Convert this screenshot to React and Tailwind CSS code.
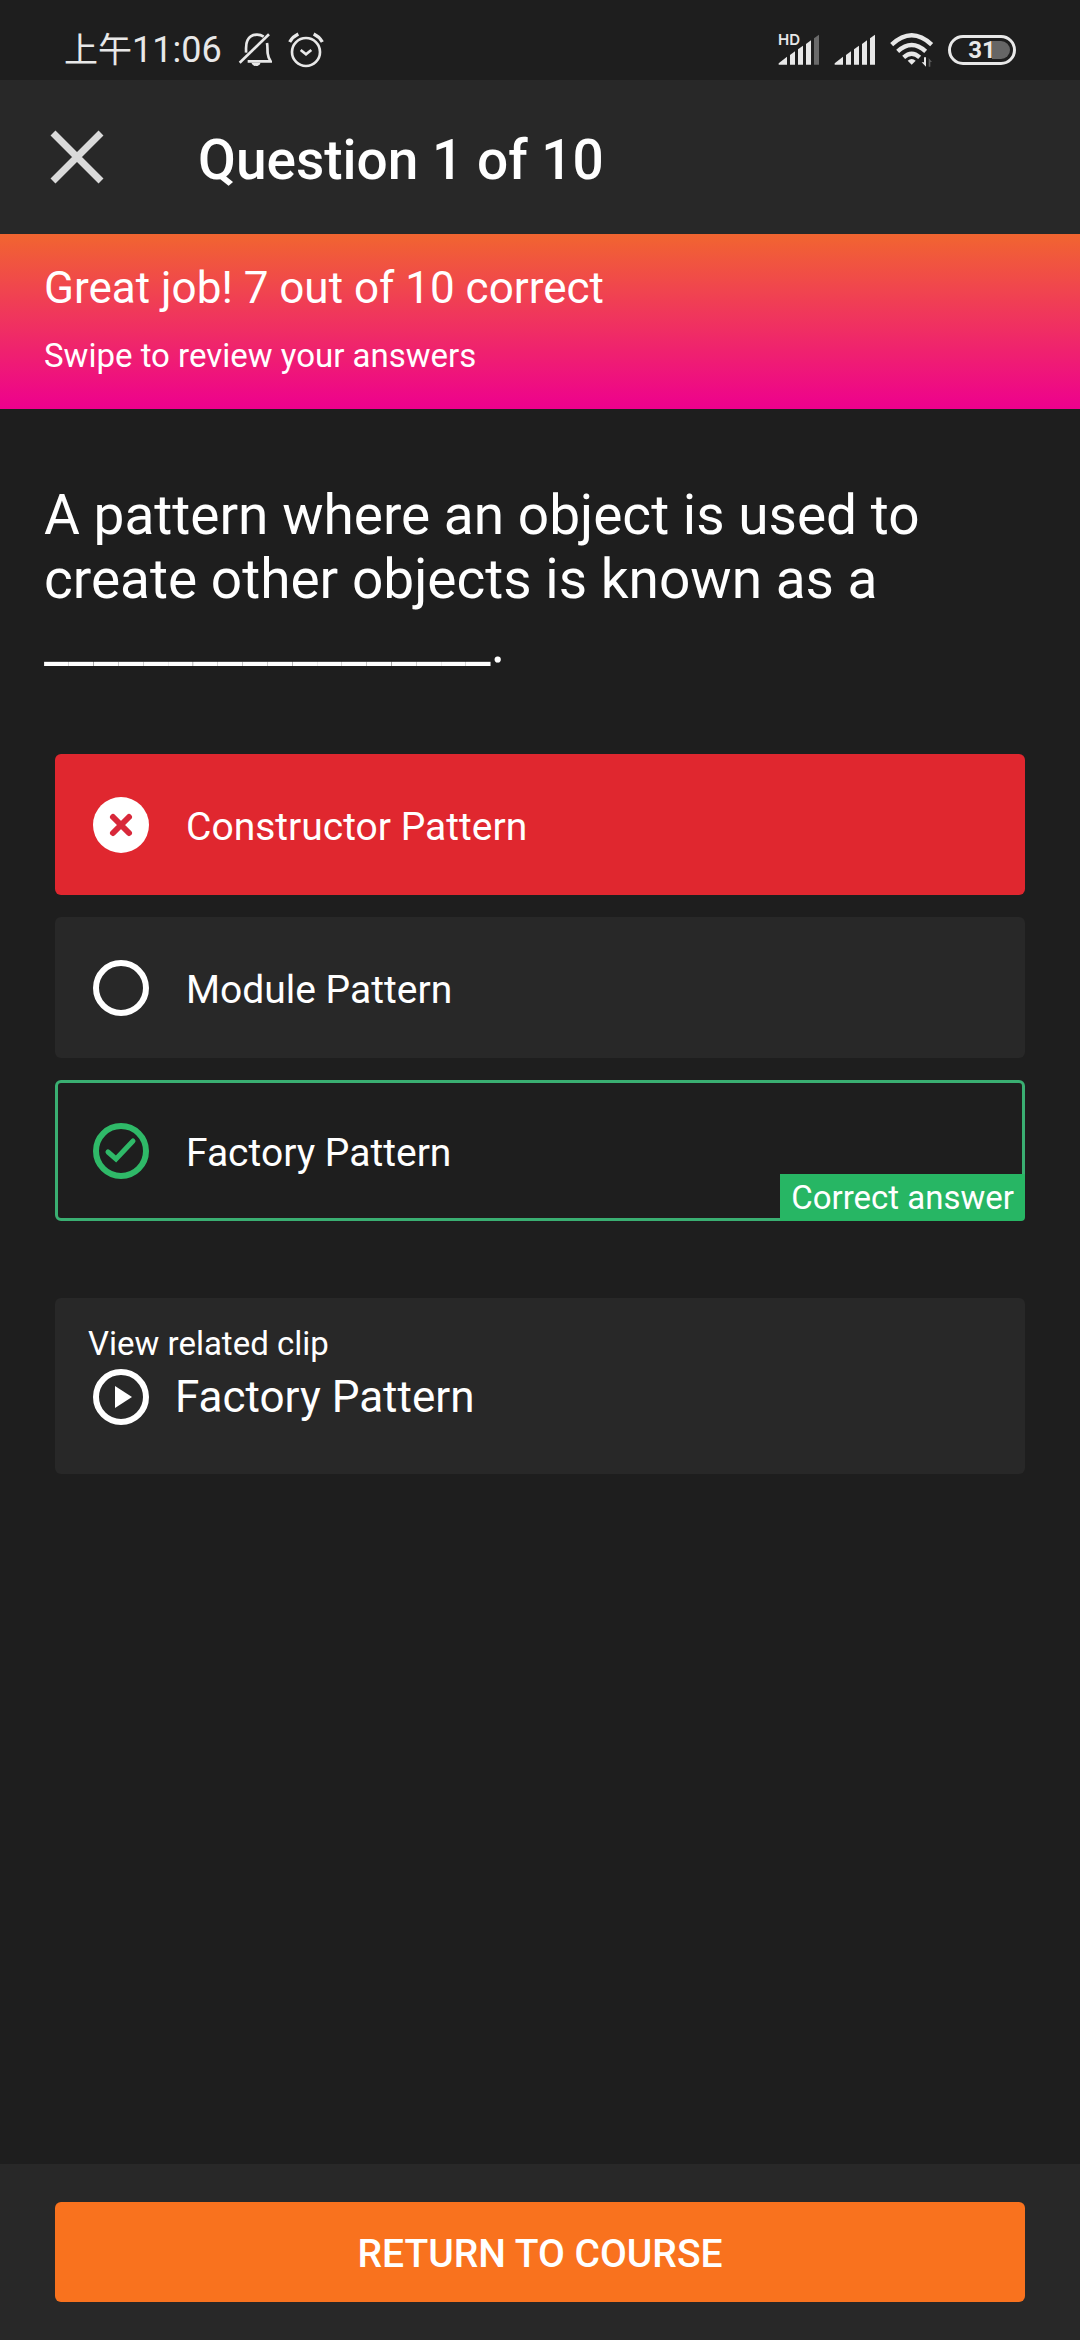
const options = [
  { id: "constructor", label: "Constructor Pattern", state: "wrong" },
  { id: "module", label: "Module Pattern", state: "idle" },
  { id: "factory", label: "Factory Pattern", state: "correct" },
];

const cardStyles = {
  wrong: "bg-[#e0272f]",
  idle: "bg-[#282828]",
  correct: "border-3 border-[#3aaf72]",
};

function BellOffIcon() {
  return (
    <svg viewBox="0 0 102 108" className="h-9 w-[34px]" fill="none" stroke="#e8e8e8" strokeWidth="8" aria-hidden="true">
      <path d="M5 92L93 7" />
      <path d="M24 62C25 50 22 38 28 26C34 13 46 8 57 8C65 8 71 10 77 14" />
      <path d="M87 33C89 42 88 54 89 64C90 74 93 80 98 88H29" />
      <path d="M40 92H68C65 99 60 102 54 102S43 99 40 92Z" fill="#e8e8e8" stroke="none" />
    </svg>
  );
}

function AlarmIcon() {
  return (
    <svg viewBox="0 0 108 108" className="size-9" fill="none" stroke="#e8e8e8" strokeWidth="8" aria-hidden="true">
      <circle cx="54" cy="60" r="42" />
      <path d="M38 54L54 67L70 54" />
      <path d="M5 30Q14 14 31 6M77 6Q94 14 103 30" strokeWidth="10" />
    </svg>
  );
}

function SignalIcon({ weak }) {
  return (
    <svg viewBox="0 0 126 96" className="h-8 w-[42px]" fill="#e8e8e8" aria-hidden="true">
      <path d="M2 92V88L27 68V92Z" />
      <path d="M36 92V63L51 52V92Z" />
      <path d="M60 92V46L75 35V92Z" />
      <path d="M84 92V30L99 19V92Z" />
      <path d="M108 92V13L123 2V92Z" fill={weak ? "#6a6a6a" : "#e8e8e8"} />
    </svg>
  );
}

function WifiIcon() {
  return (
    <svg viewBox="0 0 132 108" className="h-9 w-11" fill="none" stroke="#e8e8e8" strokeWidth="13" aria-hidden="true">
      <path d="M5 38Q65 -18 125 38" />
      <path d="M23 58Q65 20 107 58" />
      <path d="M41 76Q65 54 89 76" />
      <path d="M53 86Q65 76 77 86L65 98Z" fill="#e8e8e8" stroke="none" />
      <path d="M108 76V104L95 91H102V76Z" fill="#e8e8e8" stroke="none" />
      <path d="M116 104V78L126 90H121V104Z" fill="#5a5a5a" stroke="none" />
    </svg>
  );
}

function StateIcon({ state }) {
  if (state === "wrong") {
    return (
      <svg viewBox="0 0 56 56" className="size-14" aria-hidden="true">
        <circle cx="28" cy="28" r="28" fill="#fff" />
        <path d="M20 20L36 36M36 20L20 36" stroke="#d8283a" strokeWidth="6" strokeLinecap="round" />
      </svg>
    );
  }
  if (state === "correct") {
    return (
      <svg viewBox="0 0 56 56" className="size-14" fill="none" stroke="#2fb968" aria-hidden="true">
        <circle cx="28" cy="28" r="25" strokeWidth="6" />
        <path d="M15 29L23 36L40 18" strokeWidth="5" strokeLinecap="round" />
      </svg>
    );
  }
  return (
    <svg viewBox="0 0 56 56" className="size-14" fill="none" stroke="#fff" aria-hidden="true">
      <circle cx="28" cy="28" r="25" strokeWidth="6" />
    </svg>
  );
}

function StatusBar() {
  return (
    <div className="flex h-20 items-center justify-between px-16 pt-5 text-[#e8e8e8]">
      <div className="flex items-center">
        <span className="font-['Roboto','Noto_Sans_CJK_SC',sans-serif] text-[36px] leading-[44px]">
          <span className="text-[34px]">上午</span>11:06
        </span>
        <span className="ml-4 flex items-center gap-4">
          <BellOffIcon />
          <AlarmIcon />
        </span>
      </div>
      <div className="flex items-center gap-[14px]">
        <span className="relative flex">
          <span className="absolute -top-px left-0 font-['Inter',sans-serif] text-[15px] leading-[14px] font-semibold">HD</span>
          <SignalIcon weak />
        </span>
        <SignalIcon />
        <WifiIcon />
        <span className="relative flex h-[30px] w-[68px] items-center justify-center rounded-full border-3 border-[#e8e8e8]">
          <span className="absolute top-[3px] right-[3px] h-[18px] w-[18px] rounded-r-full bg-[#666666]" />
          <span className="relative text-[24px] leading-6 font-bold">31</span>
        </span>
      </div>
    </div>
  );
}

export default function App() {
  return (
    <div className="flex min-h-screen flex-col bg-[#1e1e1e] font-['Roboto',sans-serif] text-white">
      <StatusBar />

      <header className="flex h-[154px] items-center bg-[#282828] px-[50px]">
        <button type="button" aria-label="Close" className="flex">
          <svg viewBox="0 0 54 54" className="size-[54px]" stroke="#dadada" strokeWidth="7" aria-hidden="true">
            <path d="M3 3L51 51M51 3L3 51" />
          </svg>
        </button>
        <h1 className="ml-[94px] pt-1.5 text-[55px] leading-16 font-medium">Question 1 of 10</h1>
      </header>

      <section className="bg-linear-to-b/srgb from-[#f16530] to-[#ee008e] px-11 pt-7 pb-[33px]">
        <p className="text-[44px] leading-[52px]">Great job! 7 out of 10 correct</p>
        <p className="mt-[22px] text-[33px] leading-10">Swipe to review your answers</p>
      </section>

      <main className="flex-1">
        <h2 id="question" className="px-11 pt-[74px] text-[55px] leading-16">
          A pattern where an object is used to create other objects is known as a __________________.
        </h2>

        <div role="radiogroup" aria-labelledby="question" className="mx-[55px] mt-[79px] flex flex-col gap-[22px]">
          {options.map(({ id, label, state }) => (
            <label key={id} htmlFor={id} className={`relative flex h-[141px] items-center rounded-md ${cardStyles[state]}`}>
              <input
                id={id}
                type="radio"
                name="answer"
                defaultChecked={state === "wrong"}
                className="sr-only"
              />
              <span className={state === "correct" ? "ml-[35px]" : "ml-[38px]"}>
                <StateIcon state={state} />
              </span>
              <span className="ml-[37px] pt-1 text-[39px] leading-12">{label}</span>
              {state === "correct" && (
                <span className="absolute -right-[3px] -bottom-[3px] rounded-br-sm bg-[#27b664] px-[11px] pt-1 pb-[3px] text-[33px] leading-10">
                  Correct answer
                </span>
              )}
            </label>
          ))}
        </div>

        <a href="#clip" className="mx-[55px] mt-[77px] block rounded-md bg-[#282828] px-[33px] pt-[26px] pb-[49px]">
          <span className="block text-[33px] leading-10">View related clip</span>
          <span className="mt-[5px] flex items-center pl-[5px]">
            <svg viewBox="0 0 56 56" className="size-14" fill="none" stroke="#fff" aria-hidden="true">
              <circle cx="28" cy="28" r="25" strokeWidth="6" />
              <path d="M22 17L39 28L22 39Z" fill="#fff" stroke="none" />
            </svg>
            <span className="ml-[26px] text-[44px] leading-[52px]">Factory Pattern</span>
          </span>
        </a>
      </main>

      <footer className="bg-[#282828] px-[55px] py-[38px]">
        <button type="button" className="h-[100px] w-full rounded-md bg-[#f9721e] pt-1 text-[39px] leading-12 font-medium uppercase">
          Return to course
        </button>
      </footer>
    </div>
  );
}
